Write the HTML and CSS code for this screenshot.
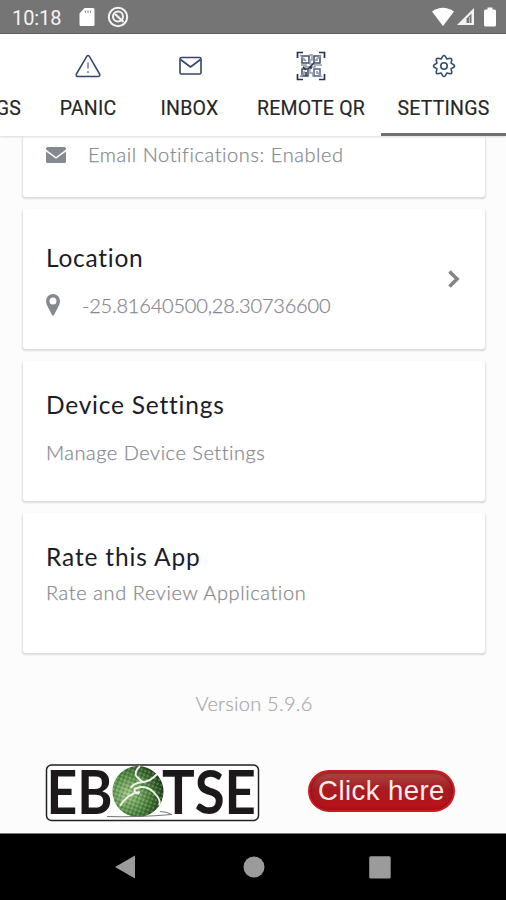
FILE: index.html
```html
<!DOCTYPE html>
<html lang="en">
<head>
<meta charset="utf-8">
<title>Settings</title>
<link rel="stylesheet" href="styles.css">
</head>
<body>
<div class="screen">
  <header class="status">
    <span class="time">10:18</span>
    <svg class="sd" width="16" height="20" viewBox="0 0 16 20"><path d="M5.500 1H14a1.500 1.500 0 0 1 1.500 1.500v15a1.500 1.500 0 0 1-1.500 1.500H2A1.500 1.500 0 0 1 .5 17.500V6.500z" fill="#fff"/><path d="M6.500 3.500v2.500M9 3.500v2.500M11.500 3.500v2.500" stroke="#999" stroke-width="1.200"/></svg>
    <svg class="quick" width="22" height="22" viewBox="0 0 22 22" fill="none" stroke="#f4f4f4"><circle cx="11" cy="11" r="9.200" stroke-width="2"/><circle cx="11" cy="10.500" r="5" stroke-width="2"/><path d="M8 8l8.500 8" stroke-width="2.200"/></svg>
    <span class="grow"></span>
    <svg width="22" height="20" viewBox="0 0 22 20"><path d="M0 4.500Q11-3 22 4.500L11 19z" fill="#fff"/></svg>
    <svg class="signal" width="19" height="19" viewBox="0 0 19 19"><path d="M18 1v17H1z" fill="#f4f4f4"/><path d="M15.500 6.500v9.500h-5v-4.500z" fill="#777"/><path d="M13.500 10v6" stroke="#bbb" stroke-width="1"/></svg>
    <svg class="battery" width="12" height="20" viewBox="0 0 12 20"><path d="M3.500.5h5v2h2a1.500 1.500 0 0 1 1.500 1.500v14a1.500 1.500 0 0 1-1.500 1.500h-9A1.500 1.500 0 0 1 0 18V4a1.500 1.500 0 0 1 1.500-1.500h2z" fill="#fff"/></svg>
  </header>

  <nav class="tabs">
    <div class="tab tab-cut"><span class="label">GS</span></div>
    <div class="tab tab-panic">
      <svg class="icon" width="28" height="28" viewBox="0 0 28 28" fill="none" stroke="#34456b" stroke-width="1.500" stroke-linejoin="round"><path d="M12.900 4.200 2.400 22q-.9 2.300 1.500 2.400h20.400q2.200-.2 1.300-2.400L15.200 4.200q-1.200-1.500-2.300 0z"/><path d="M14 10.500v6M14 19v2" stroke="#717f9c"/></svg>
      <span class="label">PANIC</span>
    </div>
    <div class="tab tab-inbox">
      <svg class="icon" width="28" height="28" viewBox="0 0 28 28" fill="none" stroke="#34456b" stroke-width="1.600" stroke-linejoin="round"><rect x="4" y="5.500" width="21" height="16.500" rx="1.500"/><path d="m4.500 7.500 10 7.500L24.500 7.500"/></svg>
      <span class="label">INBOX</span>
    </div>
    <div class="tab tab-qr">
      <svg class="icon" width="30" height="30" viewBox="0 0 30 30" fill="none" stroke="#26334f"><path d="M1.500 7V1.500H7M23 1.500h5.500V7M1.500 23v5.500H7M28.500 23v5.500H23" stroke-width="1.700"/><path d="M6 5h7v7H6zM18 5h6v7h-6zM6 18h6v7H6z" stroke="#3f4c66" stroke-width="1.500"/><path d="M18 18h6v7h-6z" stroke="#52617c" stroke-width="1.500"/><path d="M8 7v3M21 7v3M8 20v4M21 20v3M13 4h3v5h-2v4h5v3h-5v6h3v4M5 14h5v2h-3M20 14h6M10 16h9M4 4l6 6M25 4l-6 6M4 26l5-5M26 26l-5-5" stroke="#929caf" stroke-width="1.500"/><path d="M12 18l6-6M15 15v3M10 21v4M7 16l3 3" stroke-width="1.500"/></svg>
      <span class="label">REMOTE QR</span>
    </div>
    <div class="tab tab-settings active">
      <svg class="icon" width="28" height="28" viewBox="0 0 28 28" fill="none" stroke="#34506f" stroke-width="1.600" stroke-linejoin="round"><path d="M12.700 4.300Q14 2.700 15.300 4.300L16.900 7 20 6.200Q21.800 6.200 21.800 8L21 11.100 23.700 12.700Q25.300 14 23.700 15.300L21 16.900 21.800 20Q21.800 21.800 20 21.800L16.900 21 15.300 23.700Q14 25.300 12.700 23.700L11.100 21 8 21.800Q6.200 21.800 6.200 20L7 16.900 4.300 15.300Q2.700 14 4.300 12.700L7 11.100 6.200 8Q6.200 6.200 8 6.200L11.100 7z"/><circle cx="14" cy="14" r="3.200"/></svg>
      <span class="label">SETTINGS</span>
    </div>
  </nav>

  <main class="content">
    <section class="card notifications">
      <svg width="20" height="16" viewBox="0 0 20 16"><path d="M1.500 0h17A1.500 1.500 0 0 1 20 1.500v1L10 10 0 2.500v-1A1.500 1.500 0 0 1 1.500 0z" fill="#858990"/><path d="M0 4.500l10 7.300L20 4.500v10a1.500 1.500 0 0 1-1.500 1.500h-17A1.500 1.500 0 0 1 0 14.500z" fill="#858990"/></svg>
      <span class="sub email">Email Notifications: Enabled</span>
    </section>
    <section class="card location">
      <div class="grow">
        <h2 class="t-location">Location</h2>
        <div class="row">
          <svg width="14" height="22" viewBox="0 0 14 22"><path fill-rule="evenodd" d="M7 0a7 7 0 0 1 7 7c0 3-1.500 5-2.500 7.200L8 21q-1 1.500-2 0l-3.500-6.800C1.500 12 0 10 0 7a7 7 0 0 1 7-7zm0 3.600a3.500 3.500 0 1 0 0 7 3.500 3.500 0 0 0 0-7z" fill="#858990"/></svg>
          <span class="sub coords">-25.81640500,28.30736600</span>
        </div>
      </div>
      <svg class="chevron" width="12" height="18" viewBox="0 0 12 18" fill="none" stroke="#858585" stroke-width="3.600"><path d="m1.500 1.500 7.500 7.500-7.500 7.500"/></svg>
    </section>
    <section class="card device">
      <h2 class="t-device">Device Settings</h2>
      <p class="sub manage">Manage Device Settings</p>
    </section>
    <section class="card rate">
      <h2 class="t-rate">Rate this App</h2>
      <p class="sub review">Rate and Review Application</p>
    </section>
    <p class="version">Version 5.9.6</p>
    <div class="banner">
      <svg class="logo" width="216" height="59" viewBox="0 0 216 59">
        <defs>
          <radialGradient id="ball" cx=".3" cy=".55" r=".75"><stop offset="0" stop-color="#a3c78d"/><stop offset=".5" stop-color="#528a43"/><stop offset="1" stop-color="#152f12"/></radialGradient>
          <pattern id="dimples" width="4" height="4" patternUnits="userSpaceOnUse" patternTransform="rotate(20)"><circle cx="1" cy="1" r=".9" fill="#c4e09f" opacity=".45"/><circle cx="3" cy="3" r=".9" fill="#173d17" opacity=".4"/></pattern>
        </defs>
        <rect x="1.500" y="2" width="212" height="55.500" rx="5" fill="#fff" stroke="#222" stroke-width="1.500"/>
        <g class="logo-text"><text x="1.500" y="51" textLength="66" lengthAdjust="spacingAndGlyphs">EB</text><text x="117" y="51" textLength="94" lengthAdjust="spacingAndGlyphs">TSE</text></g>
        <circle cx="93" cy="28.500" r="25.500" fill="url(#ball)"/><circle cx="93" cy="28.500" r="25.500" fill="url(#dimples)"/>
        <g fill="none" stroke="#eef2ea" stroke-width="1.900"><path d="M95 3q-7 7-3 11 3 3 6 5-10 1-12 6M97 19q8 0 15-8M75 43q8-13 20-14M94 31q-8-4-2-6 11-4 20 8 4 5 2 9"/></g>
        <path d="M62 53.500q30 1 65-2-6-3-12-3" fill="none" stroke="#777"/>
      </svg>
      <button class="cta">Click here</button>
    </div>
  </main>

  <footer class="navbar">
    <svg width="20" height="24" viewBox="0 0 20 24"><path d="M0 12 20 .5v23z" fill="#9b9b9b"/></svg>
    <svg class="home" width="22" height="22" viewBox="0 0 22 22"><circle cx="11" cy="11" r="10.500" fill="#9b9b9b"/></svg>
    <svg width="22" height="23" viewBox="0 0 22 23"><rect x=".2" y=".3" width="21.500" height="22.300" rx="1.500" fill="#9b9b9b"/></svg>
  </footer>
</div>
</body>
</html>
```
FILE: styles.css
```css
* { box-sizing: border-box; }
body { margin: 0; }
h2, p { margin: 0; }
svg { display: block; flex: none; }
.grow { flex: 1; }
.screen {
  width: 506px; height: 900px; overflow: hidden;
  display: flex; flex-direction: column;
  font-family: Lato, "Liberation Sans", sans-serif;
  font-variant-ligatures: none;
  background: #fcfcfc;
}
.status {
  height: 34px; flex: none; display: flex; align-items: center;
  padding: 0 10px 0 12px;
  background: #757575; border-bottom: 1px solid #626262;
}
.time { width: 67px; font: 400 20px/34px Roboto, sans-serif; letter-spacing: -.1px; color: #f4f4f4; padding-top: 2px; }
.quick { margin-left: 12px; }
.signal { margin-left: 2px; }
.battery { margin-left: 9px; }

.tabs {
  height: 102px; flex: none; display: flex; background: #fff; position: relative;
  box-shadow: 0 1px 2px rgba(0, 0, 0, .14);
}
.tab { display: flex; flex-direction: column; align-items: center; flex: none; }
.icon { height: 30px; margin-top: 17px; }
.label { margin-top: 16px; font: 400 19.500px/24px Roboto, sans-serif; letter-spacing: .2px; color: #262626; -webkit-text-stroke: .15px #262626; white-space: nowrap; }
.tab-cut { width: 38px; align-items: flex-end; padding-right: 17px; }
.tab-cut .label { margin-top: 63px; }
.tab-panic { width: 100px; }
.tab-inbox { width: 103px; }
.tab-qr { width: 140px; }
.tab-settings { width: 125px; }
.active { border-bottom: 3px solid #707070; }

.content { flex: 1; padding: 0 21px 0 23px; }
.card {
  height: 140px; margin-bottom: 12px; padding: 0 23px;
  background: #fff; border-radius: 3px;
  box-shadow: 0 1.500px 2px .5px rgba(0, 0, 0, .13);
}
h2 { font-size: 24.500px; line-height: 30px; font-weight: 400; color: #1c1c2a; white-space: nowrap; }
.t-location { letter-spacing: .75px; padding-top: 1px; }
.t-device { letter-spacing: .78px; }
.t-rate { letter-spacing: .85px; }
.sub { font-size: 20px; line-height: 24px; font-weight: 300; color: #868990; -webkit-text-stroke: .25px #868990; white-space: nowrap; }
.notifications { height: 61px; display: flex; align-items: flex-start; padding-top: 11px; }
.email { margin: -5px 0 0 22px; letter-spacing: .57px; }
.location { display: flex; align-items: center; padding-right: 25px; }
.row { display: flex; align-items: center; margin-top: 19px; }
.location .grow { padding-top: 1px; }
.coords { margin-left: 22px; padding-top: 1px; letter-spacing: -.2px; }
.device { padding-top: 29px; }
.manage { margin-top: 20px; letter-spacing: .52px; }
.rate { padding-top: 29px; }
.review { margin-top: 8px; letter-spacing: .6px; }
.version { margin-top: 38px; text-align: center; font-size: 20px; line-height: 24px; font-weight: 300; letter-spacing: .25px; color: #a5a8ac; -webkit-text-stroke: .2px #a5a8ac; }
.banner { display: flex; margin: 48px 0 0 22px; }
.logo-text { font: 700 61px Lato, sans-serif; fill: #1d191b; }
.cta {
  width: 147px; height: 42px; margin: 7px 0 0 47px; padding: 0;
  border: 2px solid #cf1a21; border-radius: 21px;
  background: linear-gradient(#a94a42, #a61b21 45%, #bd1119);
  box-shadow: inset 0 0 3px 1px #8c1518;
  color: #ffecec; font: 400 27.500px/36px "Liberation Sans", sans-serif; letter-spacing: .45px; white-space: nowrap;
}
.navbar {
  height: 67px; flex: none; background: #000; border-top: 1px solid #777;
  display: flex; align-items: center; justify-content: space-between; padding: 0 115px;
}
.home { margin-left: 3px; }
```
